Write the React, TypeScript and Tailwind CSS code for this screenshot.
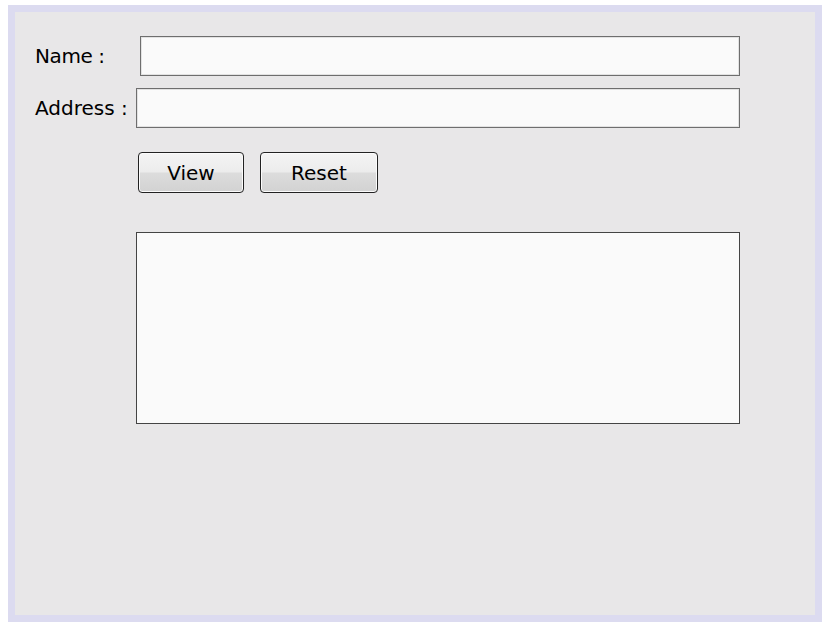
export default function App() {
  const btn =
    "h-[41px] rounded-[4px] border border-[#222] bg-[linear-gradient(to_bottom,#f4f4f4_0%,#ececec_48%,#dcdcdc_52%,#d2d2d2_100%)] shadow-[inset_0_0_0_1px_#fbfbfb] text-[20px] leading-none text-black flex items-center justify-center";
  const field =
    "h-[40px] border border-[#6e6e6e] bg-[#fafafa] shadow-[inset_0_0_0_1px_#e2e2e2]";

  return (
    <div className="w-[828px] h-[628px] bg-white pl-[8px] pt-[5px] font-['DejaVu_Sans',sans-serif]">
      <div className="w-[814px] h-[617px] border-[7px] border-[#dcdbf0] bg-[#e8e7e8] flex flex-col">
        <div className="flex items-center h-[40px] mt-[24px] pl-[20px]">
          <span className="w-[105px] text-[20px] leading-none text-black tracking-[-0.4px]">Name :</span>
          <div className={`${field} w-[600px]`} />
        </div>
        <div className="flex items-center h-[40px] mt-[12px] pl-[20px]">
          <span className="w-[101px] text-[20px] leading-none text-black">Address :</span>
          <div className={`${field} w-[604px]`} />
        </div>
        <div className="flex mt-[24px] pl-[123px] gap-[16px]">
          <button className={`${btn} w-[106px]`}>View</button>
          <button className={`${btn} w-[118px]`}>Reset</button>
        </div>
        <div className="mt-[39px] ml-[121px] w-[604px] h-[192px] border border-[#444] bg-[#fafafa]" />
      </div>
    </div>
  );
}
